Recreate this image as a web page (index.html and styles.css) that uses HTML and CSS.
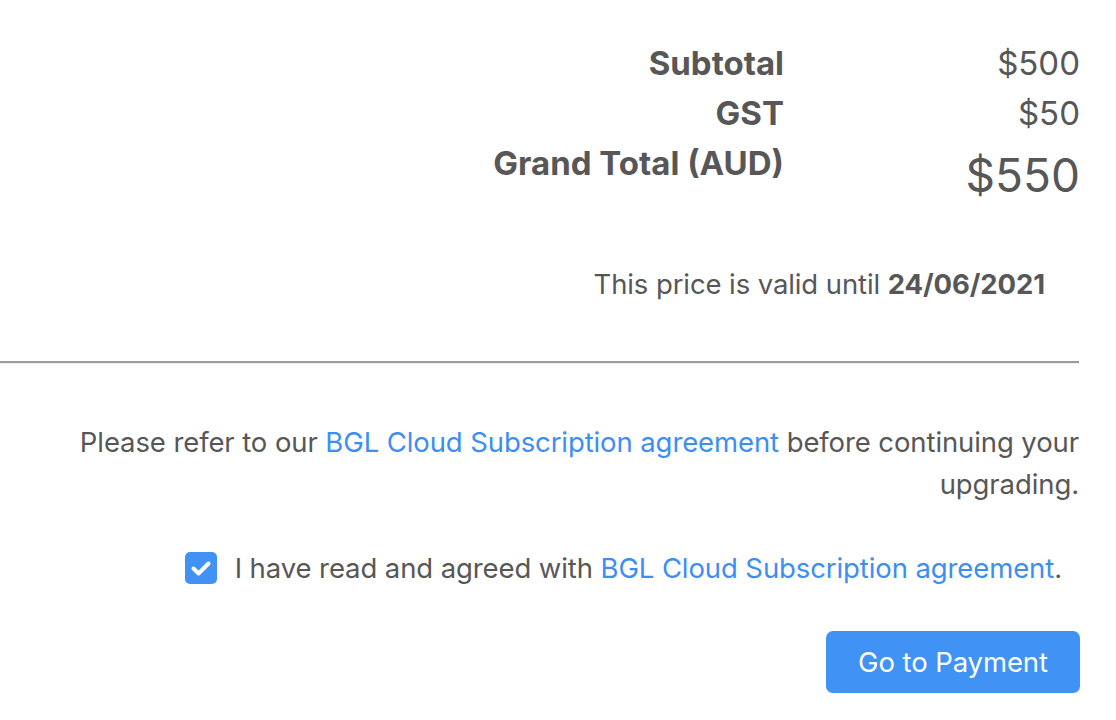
FILE: index.html
```html
<!DOCTYPE html>
<html lang="en">
<head>
<meta charset="utf-8">
<title>Payment summary</title>
<link rel="stylesheet" href="styles.css">
</head>
<body>
<div class="page">
  <div class="summary">
    <div class="row">
      <div class="label">Subtotal</div>
      <div class="value">$500</div>
    </div>
    <div class="row">
      <div class="label">GST</div>
      <div class="value">$50</div>
    </div>
    <div class="row">
      <div class="label">Grand Total (AUD)</div>
      <div class="value value-total">$550</div>
    </div>
  </div>
  <p class="validity">This price is valid until <strong>24/06/2021</strong></p>
  <hr class="divider">
  <p class="notice">Please refer to our <a href="#" class="link">BGL Cloud Subscription agreement</a> before continuing your upgrading.</p>
  <label class="agree">
    <span class="checkbox">
      <svg viewBox="0 0 32 32" width="32" height="32" aria-hidden="true"><path d="M8.5 16.5l5 5 10-10" fill="none" stroke="#fff" stroke-width="4" stroke-linecap="round" stroke-linejoin="round"/></svg>
    </span>
    <span class="agree-text">I have read and agreed with <a href="#" class="link">BGL Cloud Subscription agreement</a>.</span>
  </label>
  <div class="actions">
    <button class="btn-primary" type="button">Go to Payment</button>
  </div>
</div>
</body>
</html>
```
FILE: styles.css
```css
* { box-sizing: border-box; }
html, body { margin: 0; padding: 0; background: #fff; }
body {
  font-family: Inter, "Noto Sans", "Liberation Sans", sans-serif;
  color: #575757;
  font-size: 27.5px;
  letter-spacing: -0.1px;
}
.page {
  width: 1080px;
  padding-top: 38px;
  display: flex;
  flex-direction: column;
  align-items: stretch;
}
.summary {
  display: flex;
  flex-direction: column;
}
.row {
  display: grid;
  grid-template-columns: 1fr 296px;
  align-items: start;
  letter-spacing: 0;
}
.label {
  text-align: right;
  font-weight: 700;
  font-size: 33px;
  line-height: 50px;
}
.value {
  text-align: right;
  font-weight: 400;
  font-size: 33px;
  line-height: 50px;
}
.value-total {
  font-size: 46px;
  line-height: 75px;
}
.validity {
  margin: 50px 35px 0 0;
  text-align: right;
  line-height: 42px;
}
.validity strong { font-weight: 700; }
.divider {
  margin: 56px 1px 0 0;
  border: 0;
  height: 3px;
  border-top: 2px solid #9b9b9b;
  border-bottom: 1px solid #ededed;
}
.notice {
  margin: 57px 1px 0 0;
  text-align: right;
  line-height: 42px;
}
.link { color: #3d8ef2; text-decoration: none; }
.agree {
  margin-top: 42px;
  align-self: flex-end;
  margin-right: 18px;
  display: flex;
  align-items: center;
  gap: 18px;
  line-height: 42px;
}
.checkbox {
  width: 32px;
  height: 32px;
  border-radius: 5px;
  background: #4192f4;
  display: flex;
}
.actions {
  margin-top: 42px;
  display: flex;
  justify-content: flex-end;
}
.btn-primary {
  width: 254px;
  height: 62px;
  border: 0;
  border-radius: 7px;
  background: #4192f5;
  color: #fff;
  font-family: Inter, "Noto Sans", "Liberation Sans", sans-serif;
  font-size: 27.5px;
  letter-spacing: -0.1px;
  box-shadow: 0 3px 0 #efefef;
  padding: 0;
}
```
